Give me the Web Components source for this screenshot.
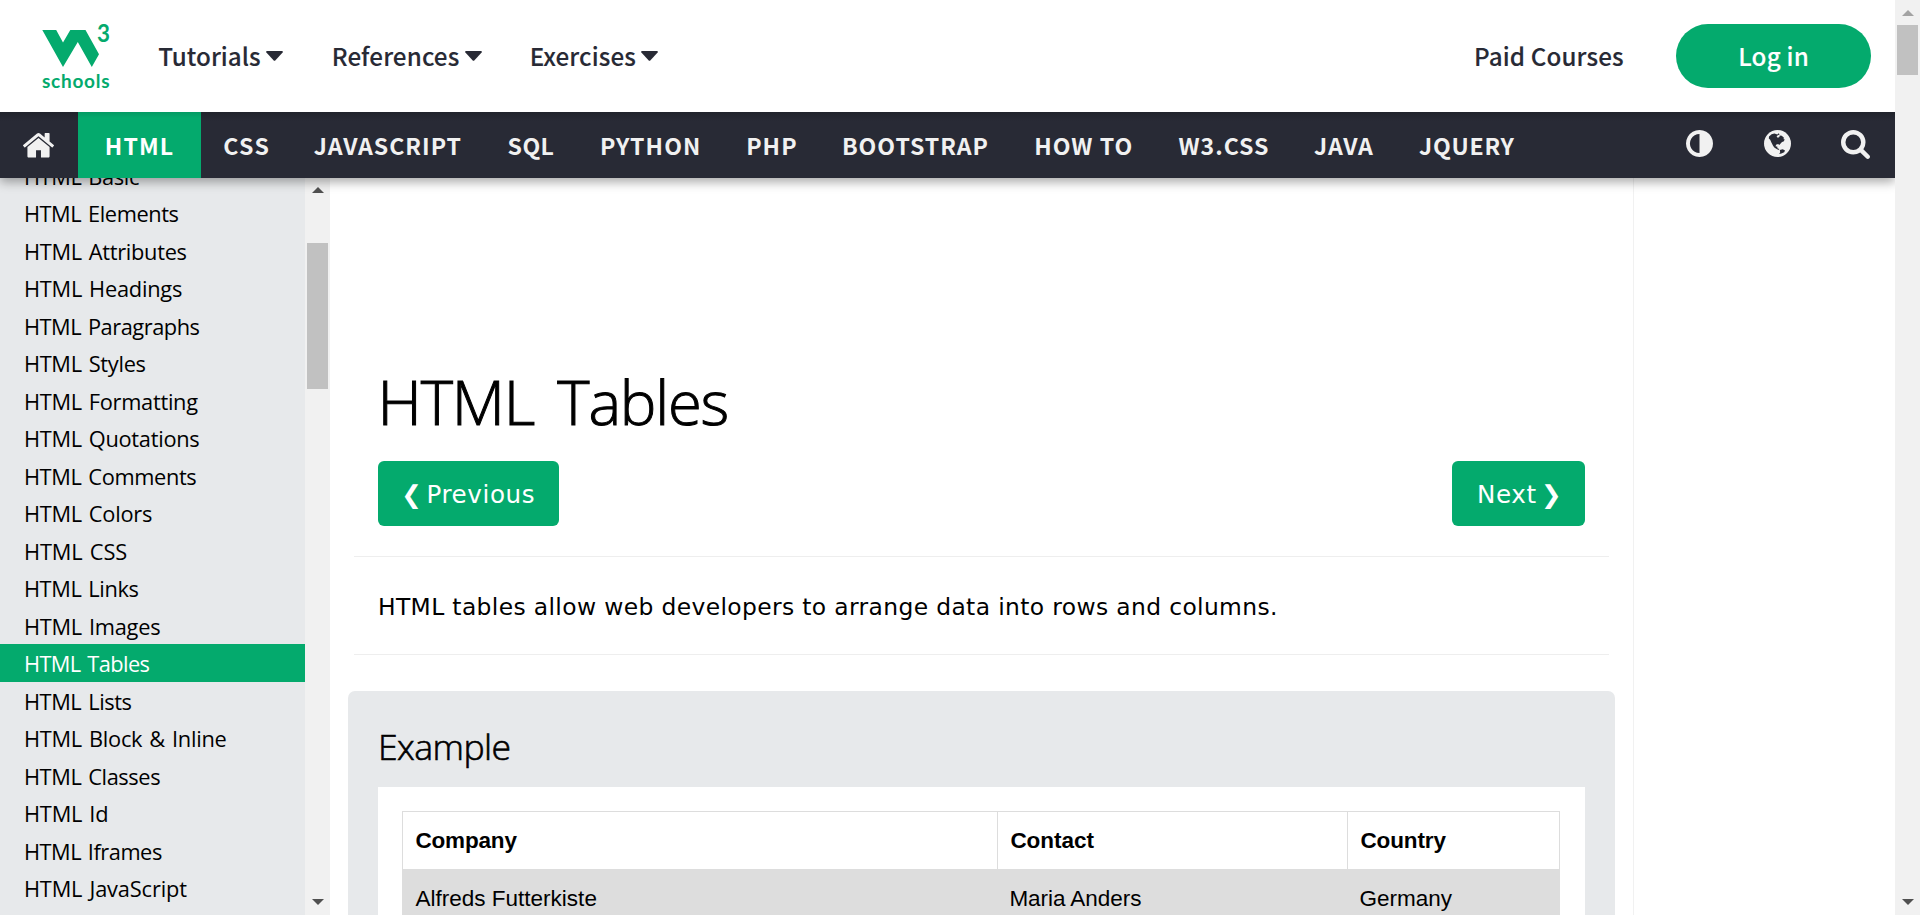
<!DOCTYPE html>
<html lang="en">
<head>
<meta charset="utf-8">
<title>HTML Tables</title>
<style>
html,body{margin:0;height:100%;overflow:hidden;background:#fff;color:#000}
</style>
</head>
<body>
<w3-page></w3-page>
<script>
const define = (name, html, init) => customElements.define(name, class extends HTMLElement {
  connectedCallback() {
    if (this.shadowRoot) return;
    const root = this.attachShadow({mode: 'open'});
    root.innerHTML = html;
    if (init) init.call(this, root);
  }
});
const ctx = document.createElement('canvas').getContext('2d');

/* One line of text whose ink spans exactly the width given in "w"; "ws" widens each space. */
define('fit-text', `<style>:host{display:block;flex:none;white-space:nowrap;box-sizing:border-box}span{display:block}</style><span><slot></slot></span>`,
function (root) {
  const cs = getComputedStyle(this), t = this.textContent, w = +this.getAttribute('w'), ws = +(this.getAttribute('ws') || 0);
  ctx.font = `${cs.fontWeight} ${cs.fontSize} ${cs.fontFamily}`;
  const m = ctx.measureText(t), spaces = t.split(' ').length - 1;
  const ls = t.length > 1 ? (w - ws * spaces - m.actualBoundingBoxLeft - m.actualBoundingBoxRight) / (t.length - 1) : 0;
  this.style.width = w + 'px';
  const s = root.querySelector('span');
  s.style.letterSpacing = ls.toFixed(3) + 'px';
  s.style.wordSpacing = ws + 'px';
  s.style.marginLeft = m.actualBoundingBoxLeft.toFixed(2) + 'px';
});

define('w3-logo', `<style>:host{display:block;width:68px;height:70px;flex:none;margin-top:8px}svg{display:block;overflow:visible}</style>
<svg width="68" height="70" viewBox="0 0 68 70" fill="#04AA6D">
<path d="M.3 5H14.2L21 17.6 28.3 5H43.5L57 29.3 49.8 42 35.8 17 21 42Z"/>
<text x="55" y="17.2" font-family="Lato" font-weight="700" font-size="25" textLength="13" lengthAdjust="spacingAndGlyphs">3</text>
<text x="0" y="62.6" font-family="Lato" font-weight="700" font-size="19" textLength="67.5">schools</text>
</svg>`);

define('w3-icon', `<style>:host{display:block;flex:none}svg{display:block;width:100%;height:100%}</style><svg preserveAspectRatio="none"></svg>`,
function (root) {
  const icons = {
    caret: ['0 0 17 10', '#282A35', '<path d="M1 0H16Q17.3.2 16.6 1.4L9.5 9.2Q8.5 10.2 7.5 9.2L.4 1.4Q-.3.2 1 0Z"/>'],
    home: ['26 253 1612 1283', '#f1f1f1', '<path d="M1408 992v480q0 26-19 45t-45 19h-384v-384h-256v384h-384q-26 0-45-19t-19-45v-480q0-1 .5-3t.5-3l575-474 575 474q1 2 1 6zm223-69l-62 74q-8 9-21 11h-3q-13 0-21-7l-692-577-692 577q-12 8-24 7-13-2-21-11l-62-74q-8-10-7-23.5t11-21.5l719-599q32-26 76-26t76 26l244 204v-195q0-14 9-23t23-9h192q14 0 23 9t9 23v408l219 182q10 8 11 21.5t-7 23.5z"/>'],
    adjust: ['128 128 1536 1536', '#f1f1f1', '<path d="M896 1440v-1088q-148 0-273 73t-198 198-73 273 73 273 198 198 273 73zm768-544q0 209-103 385.5t-279.5 279.5-385.5 103-385.5-103-279.5-279.5-103-385.5 103-385.5 279.5-279.5 385.5-103 385.5 103 279.5 279.5 103 385.5z"/>'],
    globe: ['0 0 27 27', '#f1f1f1', '<circle cx="13.5" cy="13.5" r="13.5"/><path fill="#282A35" d="M5 6.4 7.6 4.3 10.4 3.6 13.4 4.4 14.6 3.3 15.6 4.4 13.4 5.6 12.6 6.8 13.9 7.8 15.4 7 15.7 5.4 17.8 5.7 20.2 8.1 19.2 9.1 20.8 9.6 19.6 11.4 18 12 16.4 13.8 15.3 15.1 14.1 14.1 12 14.8 11.6 16.4 13.3 16.6 13.4 18.2 14.8 18.7 15.3 20.1 13.6 19.5 10.6 17.8 9.2 16 7.4 12.6 6.2 9.8 4.8 8.4Z"/><path fill="#282A35" d="M15.8 20.1 18.7 19.2 21 20.4 20.2 22.2 17.4 23.6 15.2 24 16.2 22.2Z"/>'],
    search: ['64 128 1664 1664', '#f1f1f1', '<path d="M1216 832q0-185-131.5-316.5t-316.5-131.5-316.5 131.5-131.5 316.5 131.5 316.5 316.5 131.5 316.5-131.5 131.5-316.5zm512 832q0 52-38 90t-90 38q-54 0-90-38l-343-342q-179 124-399 124-143 0-273.5-55.5t-225-150-150-225-55.5-273.5 55.5-273.5 150-225 225-150 273.5-55.5 273.5 55.5 225 150 150 225 55.5 273.5q0 220-124 399l343 343q37 37 37 90z"/>']
  };
  const [vb, fill, body] = icons[this.getAttribute('name')], svg = root.querySelector('svg');
  svg.setAttribute('viewBox', vb); svg.setAttribute('fill', fill); svg.innerHTML = body;
});

define('w3-header', `<style>
:host{display:flex;align-items:center;height:112px;flex:none;position:relative;z-index:3;padding:0 24px 0 42px;background:#fff;color:#282A35;box-sizing:border-box;font:500 24.2px/40px "Noto Sans CJK SC",sans-serif;-webkit-text-stroke:.1px}
w3-icon{width:17px;height:10px;margin:0 50px 0 6px}
.login{width:195px;height:64px;border-radius:32px;background:#04AA6D;color:#fff;margin-left:53px;display:flex;align-items:center;justify-content:center;box-sizing:border-box;padding-left:1px}
</style>
<w3-logo></w3-logo>
<fit-text w="101.7" style="margin-left:48.3px">Tutorials</fit-text><w3-icon name="caret"></w3-icon>
<fit-text w="125" style="margin-left:.7px">References</fit-text><w3-icon name="caret"></w3-icon>
<fit-text w="103.5">Exercises</fit-text><w3-icon name="caret"></w3-icon>
<fit-text w="147" style="margin-left:auto">Paid Courses</fit-text>
<div class="login"><fit-text w="67.5">Log in</fit-text></div>`);

define('w3-topnav', `<style>
:host{display:flex;align-items:center;height:66px;flex:none;position:relative;z-index:2;padding:0 25px 0 23px;color:#f1f1f1;box-sizing:border-box;background:linear-gradient(#20232b,#282A35 9px);box-shadow:0 4px 10px rgba(0,0,0,.34);font:700 23.1px/40px "Noto Sans CJK SC",sans-serif}
.home{width:31px;height:24.5px;margin:1px 24px 0 0}
.on{width:123px;height:66px;background:linear-gradient(#049a63,#04AA6D 6px);color:#fff;display:flex;align-items:center;justify-content:center}
.i{width:27px;height:27px;margin:-3px 0 0 51px}
.s{width:29px;height:29px;margin-top:-2px;margin-left:50px}
</style>
<w3-icon class="home" name="home"></w3-icon>
<div class="on"><fit-text w="66" style="margin-left:.6px">HTML</fit-text></div>
<fit-text w="44.2" style="margin-left:23.2px">CSS</fit-text>
<fit-text w="146.8" style="margin-left:45.4px">JAVASCRIPT</fit-text>
<fit-text w="46" style="margin-left:47px">SQL</fit-text>
<fit-text w="97" style="margin-left:48.4px">PYTHON</fit-text>
<fit-text w="48" style="margin-left:49.2px">PHP</fit-text>
<fit-text w="143.6" style="margin-left:47.8px">BOOTSTRAP</fit-text>
<fit-text w="95.4" style="margin-left:48.6px">HOW TO</fit-text>
<fit-text w="89.5" style="margin-left:47px">W3.CSS</fit-text>
<fit-text w="59" style="margin-left:46px">JAVA</fit-text>
<fit-text w="95.6" style="margin-left:46px">JQUERY</fit-text>
<w3-icon class="i" name="adjust" style="margin-left:auto"></w3-icon>
<w3-icon class="i" name="globe"></w3-icon>
<w3-icon class="i s" name="search"></w3-icon>`);

define('scroll-bar', `<style>
:host{display:flex;flex-direction:column;flex:none;width:25px;background:#f1f1f1;box-sizing:border-box}
svg{display:block;margin:0 auto;flex:none}
i{display:block;width:21px;margin:0 auto;background:#c1c1c1;flex:none}
b{flex:1}
</style><svg class="u" width="12" height="6"><path d="M6 0 12 6H0Z"/></svg><i></i><b></b><svg class="d" width="12" height="6"><path d="M0 0H12L6 6Z" fill="#505050"/></svg>`,
function (root) {
  const a = n => this.getAttribute(n), q = s => root.querySelector(s);
  q('.u').style.marginTop = a('up') + 'px';
  q('.u').setAttribute('fill', a('fill'));
  q('i').style.marginTop = a('gap') + 'px';
  q('i').style.height = a('thumb') + 'px';
  q('.d').style.marginBottom = a('down') + 'px';
});

define('w3-sidebar', `<style>
:host{display:flex;width:330px;flex:none;overflow:hidden}
nav{width:305px;background:#E7E9EB;overflow:hidden;font:400 21.8px/37.5px "Open Sans",sans-serif}
div{padding:1px 0 0 25.9px;height:37.5px;box-sizing:border-box}
div:first-child{margin-top:-21.1px}
.on{background:#04AA6D;color:#fff}
</style><nav></nav><scroll-bar up="9" gap="50" thumb="146" down="10" fill="#505050"></scroll-bar>`,
function (root) {
  const items = [['Basic',113],['Elements',152.6],['Attributes',160.7],['Headings',156],['Paragraphs',173.7],['Styles',119.7],['Formatting',172.3],['Quotations',173.4],['Comments',170.4],['Colors',126],['CSS',100.4],['Links',112.7],['Images',134.3],['Tables',123.7],['Lists',105.7],['Block &amp; Inline',200.7],['Classes',134.3],['Id',81.4],['Iframes',136],['JavaScript',161.3]];
  root.querySelector('nav').innerHTML = items.map(([t, w]) => `<div class="${t === 'Tables' ? 'on' : ''}"><fit-text w="${w}" ws="1.6">HTML ${t}</fit-text></div>`).join('');
});

define('nav-button', `<style>:host{display:flex;align-items:center;justify-content:center;box-sizing:border-box;height:65px;padding:3.4px 0 0 1px;border-radius:6px;background:#04AA6D;color:#fff;font:400 24.6px/40px "DejaVu Sans",sans-serif}</style><slot></slot>`);

define('example-table', `<style>
:host{display:grid;grid-template-columns:595px 350px 1fr;border:1px solid #ddd;border-bottom:0;font:400 22.5px/57px "Liberation Sans",Arial,sans-serif}
div{box-sizing:border-box;height:58px;padding-left:12.4px;border-right:1px solid #ddd}
.h{font-weight:700;border-bottom:1px solid #ddd}
.r{background:#ddd}
.l{border-right:0}
</style>
<div class="h"><fit-text w="102">Company</fit-text></div><div class="h"><fit-text w="84">Contact</fit-text></div><div class="h l"><fit-text w="86">Country</fit-text></div>
<div class="r"><fit-text w="181">Alfreds Futterkiste</fit-text></div><div class="r"><fit-text w="132">Maria Anders</fit-text></div><div class="r l"><fit-text w="92.4">Germany</fit-text></div>`);

define('example-box', `<style>
:host{display:block;margin:36px 18px 0;height:400px;background:#E7E9EB;border-radius:7px;padding:0 30px;box-sizing:border-box}
.t{font:300 35.6px/50px "Open Sans",sans-serif;-webkit-text-stroke:.6px;height:96px;box-sizing:border-box;padding:30px 0 0 3px}
.w{background:#fff;padding:24px 25px 0 24px;height:300px}
</style><div class="t"><fit-text w="128.6">Example</fit-text></div><div class="w"><example-table></example-table></div>`);

define('w3-main', `<style>
:host{display:block;width:1304px;flex:none;box-sizing:border-box;border-right:1px solid #f1f1f1;overflow:hidden}
h1{margin:188px 0 25px 53.6px;font:300 61.6px/70px "Open Sans",sans-serif;-webkit-text-stroke:1px;height:70px;display:flex}
.b{display:flex;justify-content:space-between;margin:0 48px 0 48px}
hr{border:0;height:1px;background:#eee;margin:30px 24px 0}
p{margin:0;height:97px;box-sizing:border-box;padding:30px 0 0 50px;font:400 23.4px/40px "DejaVu Sans",sans-serif}
</style>
<h1><fit-text w="343" ws="2">HTML&nbsp;Tables</fit-text></h1>
<div class="b"><nav-button style="width:181px"><fit-text w="129.5" ws="-4.5">❮ Previous</fit-text></nav-button><nav-button style="width:133px"><fit-text w="80" ws="-4">Next ❯</fit-text></nav-button></div>
<hr>
<p><fit-text w="895">HTML tables allow web developers to arrange data into rows and columns.</fit-text></p>
<hr style="margin-top:0">
<example-box></example-box>`,
function (root) {
  const h = root.querySelector('h1');
  h.innerHTML = '<fit-text w="343" ws="8.5">HTML Tables</fit-text>';
});

define('w3-page', `<style>
:host{display:flex;width:1920px;height:915px;overflow:hidden}
.c{width:1895px;display:flex;flex-direction:column;overflow:hidden}
.m{display:flex;flex:1;min-height:0}
</style>
<div class="c"><w3-header></w3-header><w3-topnav></w3-topnav><div class="m"><w3-sidebar></w3-sidebar><w3-main></w3-main></div></div>
<scroll-bar up="10" gap="9" thumb="50" down="10" fill="#a3a3a3"></scroll-bar>`);
</script>
</body>
</html>
